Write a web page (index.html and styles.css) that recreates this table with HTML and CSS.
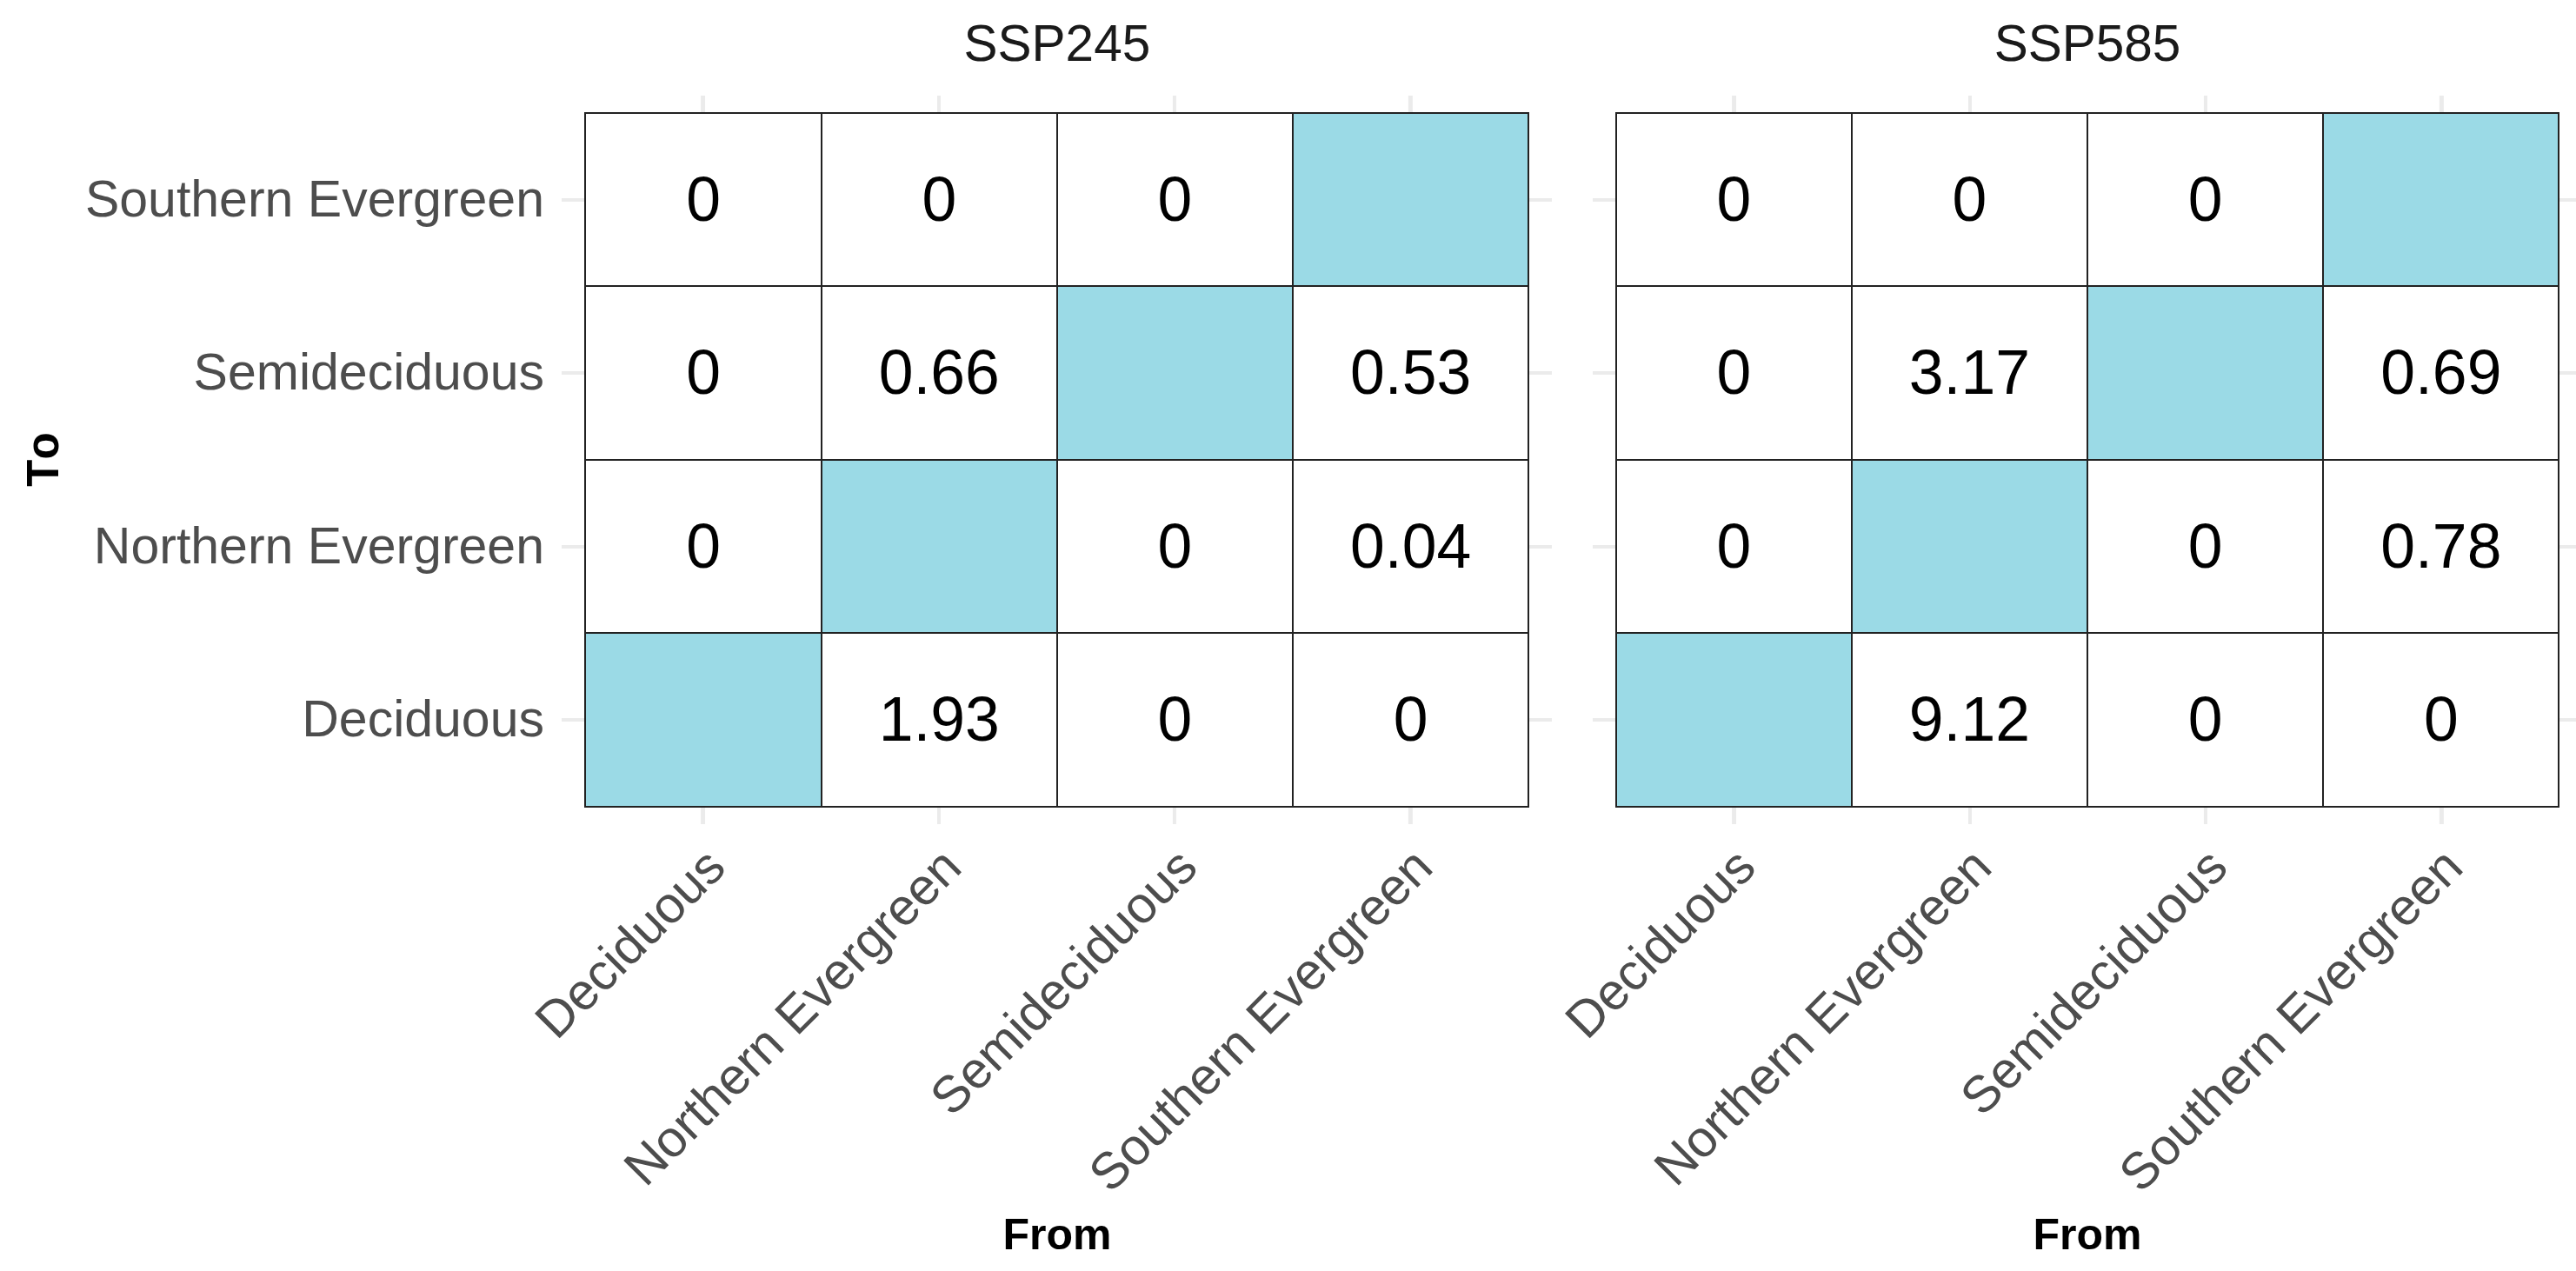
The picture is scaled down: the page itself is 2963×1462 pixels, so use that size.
FILE: index.html
```html
<!DOCTYPE html>
<html lang="en">
<head>
<meta charset="utf-8">
<title>Transition matrices</title>
<link rel="stylesheet" href="styles.css">
</head>
<body>
<div class="plot">
  <div class="strip strip-1">SSP245</div>
  <div class="strip strip-2">SSP585</div>

  <div class="ytitle"><span class="ytitle-text">To</span></div>
  <div class="ylabels">
    <div class="ylab">Southern Evergreen</div>
    <div class="ylab">Semideciduous</div>
    <div class="ylab">Northern Evergreen</div>
    <div class="ylab">Deciduous</div>
  </div>

  <div class="panel panel-1">
    <div class="tiles">
      <div class="tile">0</div><div class="tile">0</div><div class="tile">0</div><div class="tile diag"></div>
      <div class="tile">0</div><div class="tile">0.66</div><div class="tile diag"></div><div class="tile">0.53</div>
      <div class="tile">0</div><div class="tile diag"></div><div class="tile">0</div><div class="tile">0.04</div>
      <div class="tile diag"></div><div class="tile">1.93</div><div class="tile">0</div><div class="tile">0</div>
    </div>
  </div>

  <div class="panel panel-2">
    <div class="tiles">
      <div class="tile">0</div><div class="tile">0</div><div class="tile">0</div><div class="tile diag"></div>
      <div class="tile">0</div><div class="tile">3.17</div><div class="tile diag"></div><div class="tile">0.69</div>
      <div class="tile">0</div><div class="tile diag"></div><div class="tile">0</div><div class="tile">0.78</div>
      <div class="tile diag"></div><div class="tile">9.12</div><div class="tile">0</div><div class="tile">0</div>
    </div>
  </div>

  <div class="xlabels xlabels-1">
    <div class="xcell"><span class="xlab">Deciduous</span></div>
    <div class="xcell"><span class="xlab">Northern Evergreen</span></div>
    <div class="xcell"><span class="xlab">Semideciduous</span></div>
    <div class="xcell"><span class="xlab">Southern Evergreen</span></div>
  </div>
  <div class="xlabels xlabels-2">
    <div class="xcell"><span class="xlab">Deciduous</span></div>
    <div class="xcell"><span class="xlab">Northern Evergreen</span></div>
    <div class="xcell"><span class="xlab">Semideciduous</span></div>
    <div class="xcell"><span class="xlab">Southern Evergreen</span></div>
  </div>

  <div class="xtitle xtitle-1">From</div>
  <div class="xtitle xtitle-2">From</div>
</div>
</body>
</html>
```

FILE: styles.css
```css
html, body {
  margin: 0;
  padding: 0;
  background: #ffffff;
}

body {
  width: 2963px;
  height: 1462px;
  overflow: hidden;
  font-family: "Liberation Sans", Arial, sans-serif;
}

.plot {
  display: grid;
  grid-template-columns: 97.6px 548.8px 1139px 46.2px 1139px;
  grid-template-rows: 109.5px 838px 447.7px 50px;
  width: 2970.6px;
}

/* strips */
.strip {
  grid-row: 1;
  box-sizing: border-box;
  padding-top: 20.5px;
  font-size: 58.5px;
  line-height: 1;
  color: #1a1a1a;
  text-align: center;
  white-space: nowrap;
}
.strip-1 { grid-column: 3; }
.strip-2 { grid-column: 5; }

/* y axis title */
.ytitle {
  grid-row: 2;
  grid-column: 1;
  display: flex;
  align-items: center;
  justify-content: center;
}
.ytitle-text {
  display: inline-block;
  font-size: 51px;
  line-height: 1;
  font-weight: bold;
  color: #000000;
  transform: rotate(-90deg);
  font-kerning: none;
  white-space: nowrap;
}

/* y axis labels */
.ylabels {
  grid-row: 2;
  grid-column: 2;
  box-sizing: border-box;
  padding: 20px 20.4px 20px 0;
  display: grid;
  grid-template-rows: repeat(4, 199.5px);
}
.ylab {
  display: flex;
  align-items: center;
  justify-content: flex-end;
  font-size: 59px;
  line-height: 1;
  color: #4d4d4d;
  white-space: nowrap;
}

/* panels */
.panel {
  grid-row: 2;
  box-sizing: border-box;
  padding: 20px 27.1px;
  background-image:
    repeating-linear-gradient(90deg,
      transparent 0 133.4px,
      #ebebeb 133.4px 137.8px,
      transparent 137.8px 271.2px),
    repeating-linear-gradient(180deg,
      transparent 0 97.55px,
      #ebebeb 97.55px 101.95px,
      transparent 101.95px 199.5px);
  background-position: 27.1px 0, 0 20px;
  background-repeat: repeat-x, repeat-y;
  background-size: 1084.8px 100%, 100% 798px;
}
.panel-1 { grid-column: 3; }
.panel-2 { grid-column: 5; }

.tiles {
  display: grid;
  grid-template-columns: repeat(4, 271.2px);
  grid-template-rows: repeat(4, 199.5px);
}
.tile {
  display: flex;
  align-items: center;
  justify-content: center;
  background: #ffffff;
  outline: 2px solid #222222;
  outline-offset: -1px;
  font-size: 71.5px;
  line-height: 1;
  color: #000000;
}
.tile.diag {
  background: #9bdae6;
}

/* x axis labels */
.xlabels {
  grid-row: 3;
  box-sizing: border-box;
  padding: 18.5px 27.1px 0;
  display: grid;
  grid-template-columns: repeat(4, 271.2px);
  align-items: start;
}
.xlabels-1 { grid-column: 3; }
.xlabels-2 { grid-column: 5; }

.xcell {
  display: flex;
  justify-content: flex-end;
  padding-right: 142.1px;
}
.xlab {
  display: block;
  flex: none;
  font-size: 59px;
  line-height: 1;
  color: #4d4d4d;
  white-space: nowrap;
  transform-origin: 100% 0;
  transform: rotate(-45deg);
}

/* x axis titles */
.xtitle {
  grid-row: 4;
  font-size: 50px;
  line-height: 1;
  font-weight: bold;
  color: #000000;
  text-align: center;
}
.xtitle-1 { grid-column: 3; }
.xtitle-2 { grid-column: 5; }
```
